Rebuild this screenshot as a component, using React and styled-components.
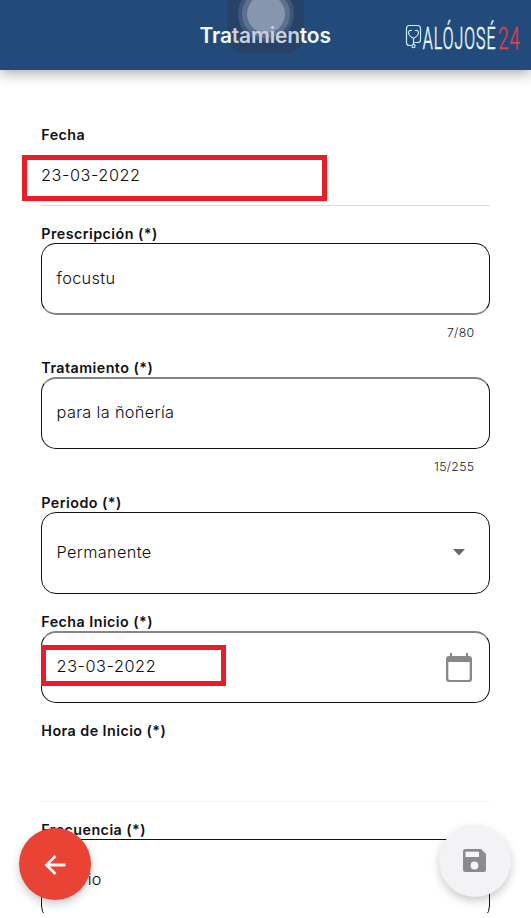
import React from "react";
import styled, { createGlobalStyle } from "styled-components";

const Global = createGlobalStyle`
  * { box-sizing: border-box; }
  body { margin: 0; background: #fff; overflow: hidden; }
`;

const Screen = styled.div`
  position: relative;
  width: 531px;
  height: 918px;
  overflow: hidden;
  background: #fff;
  font-family: Inter, "Liberation Sans", sans-serif;
  color: #17171a;
`;

const Header = styled.header`
  position: relative;
  display: grid;
  grid-template-columns: 1fr 132px 1fr;
  align-items: center;
  height: 70px;
  background: #224b7b;
  box-shadow: 0 3px 13px rgba(50, 40, 55, 0.42);
`;

const Title = styled.h1`
  grid-column: 2;
  position: relative;
  z-index: 1;
  margin: 1px 0 0;
  font-size: 21px;
  line-height: 26px;
  font-weight: 600;
  letter-spacing: -0.2px;
  white-space: nowrap;
  color: #effcff;
`;

const Dimmed = styled.span`
  color: #c9d1df;
`;

const Brand = styled.svg`
  justify-self: end;
  display: block;
  width: 126px;
  height: 48px;
  margin: 6px 0 0;
`;

const TouchButton = styled.div`
  position: absolute;
  top: -22px;
  left: 227px;
  width: 77px;
  height: 75px;
  border-radius: 17px;
  background: rgba(42, 58, 88, 0.56);
  overflow: hidden;
`;

const Ring = styled.span`
  position: absolute;
  left: ${(p) => 38.5 - p.$r}px;
  top: ${(p) => 35.5 - p.$r}px;
  width: ${(p) => p.$r * 2}px;
  height: ${(p) => p.$r * 2}px;
  border-radius: 50%;
  background: ${(p) => p.$fill};
`;

const Form = styled.main`
  height: 843px;
  padding: 56px 41px 0;
  overflow: hidden;
`;

const Field = styled.section`
  position: relative;
  height: ${(p) => p.$height}px;
`;

const Label = styled.div`
  height: 18px;
  padding-left: 0.3px;
  font-size: 14.3px;
  line-height: 18px;
  font-weight: 600;
  letter-spacing: 0.45px;
  white-space: nowrap;
  color: #111114;
`;

const Value = styled.span`
  font-size: 16.3px;
  line-height: 22px;
  font-weight: 300;
  letter-spacing: ${(p) => p.$spacing ?? 0.34}px;
  white-space: nowrap;
  color: #0c0c0e;
`;

const PlainValue = styled.div`
  display: flex;
  align-items: center;
  height: 62px;
  border-bottom: 1px solid ${(p) => p.$line};
`;

const Box = styled.div`
  display: flex;
  align-items: center;
  justify-content: space-between;
  width: 449px;
  height: ${(p) => p.$height}px;
  padding: 0 15px ${(p) => (p.$softTop ? 3 : 2)}px 14.6px;
  border: 1px solid #111;
  border-top: ${(p) => (p.$softTop ? "2px solid #858585" : "1px solid #111")};
  border-bottom: ${(p) => (p.$softBottom ? "2px solid #858585" : "1px solid #111")};
  border-radius: 15px;
`;

const Counter = styled.div`
  margin: ${(p) => p.$top}px 15.6px 0 0;
  font-size: 12.3px;
  line-height: 18px;
  font-weight: 300;
  letter-spacing: 0.3px;
  text-align: right;
  color: #202022;
`;

const Icon = styled.svg`
  display: block;
  flex: none;
  width: ${(p) => p.$w}px;
  height: ${(p) => p.$h}px;
  margin: ${(p) => p.$margin || 0};
`;

const Highlight = styled.div`
  position: absolute;
  left: ${(p) => p.$x}px;
  top: ${(p) => p.$y}px;
  width: ${(p) => p.$w}px;
  height: ${(p) => p.$h}px;
  border: 5px solid #e91d27;
`;

const RoundButton = styled.button`
  position: absolute;
  left: ${(p) => p.$x}px;
  top: ${(p) => p.$y}px;
  display: flex;
  align-items: center;
  justify-content: center;
  width: 72px;
  height: 72px;
  padding: 0;
  border: 0;
  border-radius: 50%;
  background: ${(p) => p.$fill};
  box-shadow: 0 4px 8px rgba(80, 60, 70, 0.28);
`;

function Logo() {
  return (
    <Brand viewBox="0 0 126 48" fontFamily="Roboto, Inter, sans-serif">
      <g transform="translate(0 6)" fill="none" stroke="#c8eafa" strokeWidth="1.2" strokeLinecap="round">
        <path d="M6 25.500H4.500Q1.500 25.500 1.500 22.500V8.500Q1.500 5.500 4.500 5.500H12.500Q15.500 5.500 15.500 8.500V20Q15.500 22.500 12.500 22.500H8.500V24" />
        <circle cx="8.500" cy="26" r="1.600" />
        <path d="M6.500 10.500Q3.500 10 3.500 13Q4 16 8.500 18.500Q13 16 13.500 13Q13.500 10 10.500 10.500M8.500 18.500V22" />
      </g>
      <g transform="translate(17.800 34.500) scale(.498 1)">
        <text fontSize="32" fontWeight="300" letterSpacing="2" fill="#e8faff" stroke="#e8faff" strokeWidth=".6">ALÓJOSÉ</text>
      </g>
      <g transform="translate(93 34.500) scale(.6 1)">
        <text fontSize="32" fontWeight="300" letterSpacing="1" fill="#d8414d" stroke="#d8414d" strokeWidth=".5">24</text>
      </g>
    </Brand>
  );
}

export default function App() {
  return (
    <Screen>
      <Global />
      <Header>
        <Title>Tra<Dimmed>tamien</Dimmed>tos</Title>
        <Logo />
        <TouchButton>
          <Ring $r={28} $fill="rgba(105,125,155,.35)" />
          <Ring $r={24} $fill="rgba(115,135,163,.55)" />
          <Ring $r={19} $fill="rgba(148,160,180,.8)" />
        </TouchButton>
      </Header>
      <Form>
        <Field $height={99}>
          <Label>Fecha</Label>
          <PlainValue $line="#dedede">
            <Value $spacing={0.56}>23-03-2022</Value>
          </PlainValue>
          <Highlight $x={-19} $y={29} $w={305} $h={46} />
        </Field>
        <Field $height={134}>
          <Label>Prescripción (*)</Label>
          <Box $height={72} $softBottom><Value>focustu</Value></Box>
          <Counter $top={9}>7/80</Counter>
        </Field>
        <Field $height={135}>
          <Label>Tratamiento (*)</Label>
          <Box $height={72} $softTop><Value>para la ñoñería</Value></Box>
          <Counter $top={9}>15/255</Counter>
        </Field>
        <Field $height={119}>
          <Label>Periodo (*)</Label>
          <Box $height={82}>
            <Value>Permanente</Value>
            <Icon $w={12} $h={7} $margin="0 9px 0 0" viewBox="0 0 12 7">
              <path d="M0 0H12L6 6.500Z" fill="#666" />
            </Icon>
          </Box>
        </Field>
        <Field $height={109}>
          <Label>Fecha Inicio (*)</Label>
          <Box $height={72} $softTop>
            <Value $spacing={0.56}>23-03-2022</Value>
            <Icon $w={26} $h={29} $margin="3px 2px 0 0" viewBox="0 0 26 29">
              <path fill="#888" fillRule="evenodd" d="M4 0H6V3H20V0H22V3H23Q26 3 26 6V26Q26 29 23 29H3Q0 29 0 26V6Q0 3 3 3H4ZM2.300 9V25.500Q2.300 27 4 27H22Q23.700 27 23.700 25.500V9Z" />
            </Icon>
          </Box>
          <Highlight $x={0} $y={32} $w={185} $h={41} />
        </Field>
        <Field $height={99}>
          <Label>Hora de Inicio (*)</Label>
          <PlainValue $line="#f4f4f4" />
        </Field>
        <Field $height={100}>
          <Label>Frecuencia (*)</Label>
          <Box $height={82}><Value $spacing={0.2}>Diario</Value></Box>
        </Field>
      </Form>
      <RoundButton $x={19} $y={828} $fill="#e94335" aria-label="Volver">
        <Icon $w={22} $h={20} $margin="1px 0 0 0" viewBox="0 0 22 20" fill="none" stroke="#fff5ef" strokeWidth="2.800">
          <path d="M21.500 10H2.500M11.500 1L2.500 10L11.500 19" />
        </Icon>
      </RoundButton>
      <RoundButton $x={439} $y={825} $fill="#f3f2f5" aria-label="Guardar">
        <Icon $w={23} $h={23} $margin="0 2px 2px 0" viewBox="0 0 23 23">
          <path fill="#8b8b8d" d="M2.500 0H18L23 5V20.500Q23 23 20.500 23H2.500Q0 23 0 20.500V2.500Q0 0 2.500 0Z" />
          <path fill="#f5f4f6" d="M2.500 2.700H16V8H2.500Z" />
          <circle cx="11.500" cy="16.500" r="3.900" fill="#f5f4f6" />
        </Icon>
      </RoundButton>
    </Screen>
  );
}
